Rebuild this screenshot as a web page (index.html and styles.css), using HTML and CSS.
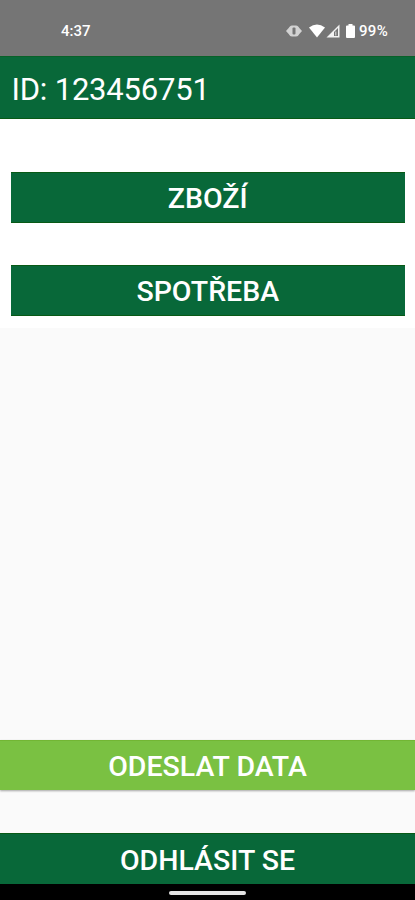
FILE: index.html
```html
<!DOCTYPE html>
<html lang="cs">
<head>
   <meta charset="UTF-8">
   <meta name="viewport" content="width=device-width, initial-scale=1">
   <link rel="stylesheet" href="styles.css">
   <title>Menu</title>
</head>

<body>
   <div class="status">
      <span>4:37</span>

      <div class="icons">
         <svg class="vibrate" width="18" height="14" viewBox="0 0 18 14">
            <path d="M1 7l4-4.500v9zM17 7l-4-4.500v9z" fill="#d2d2d2"/>
            <rect x="4.500" y="1.500" width="9" height="11" rx="2.500" fill="#d2d2d2"/>
            <rect x="7.500" y="3.500" width="3" height="7" rx="1" fill="#757575"/>
         </svg>
         <svg class="wifi" width="16" height="14" viewBox="0 0 16 14">
            <path d="M0 3.500Q8-2.500 16 3.500L8 13.500z" fill="#fff"/>
         </svg>
         <svg class="signal" width="14" height="14" viewBox="0 0 14 14">
            <path d="M.5 13.500L13.500.5v13z" fill="#f2f2f2"/>
            <path d="M8 8l4-4v8H8z" fill="#757575"/>
            <path d="M9.800 7.500v4" stroke="#ddd" stroke-width="1"/>
         </svg>
         <svg class="battery" width="9" height="14" viewBox="0 0 9 14">
            <path d="M2.500 0h4v1.500H8q1 0 1 1v10.500q0 1-1 1H1q-1 0-1-1V2.500q0-1 1-1h1.500z" fill="#fff"/>
         </svg>
         <span>99%</span>
      </div>
   </div>

   <h1>ID: 123456751</h1>

   <div class="menu">
      <button>ZBOŽÍ</button>
      <button>SPOTŘEBA</button>
   </div>

   <div class="footer">
      <button class="odeslat">ODESLAT DATA</button>
      <button>ODHLÁSIT SE</button>
   </div>

   <div class="nav"><div class="pill"></div></div>
</body>
</html>
```

FILE: styles.css
```css
* {
   border:0;
   margin:0;
   padding:0;
   box-sizing:border-box;
   font-family:Roboto, sans-serif;
}

body {
   background:#fafafa;
   display:flex;
   flex-direction:column;
   height:100vh;
   overflow:hidden;
}

.status {
   background:#757575;
   display:flex;
   justify-content:space-between;
   align-items:center;
   height:56px;
   padding:5px 27px 0 61px;
   color:#fff;
   font-size:15px;
   font-weight:500;
}

.icons {
   display:flex;
   align-items:center;
}

.icons span {
   letter-spacing:.3px;
}

.vibrate {
   margin-right:6px;
}

.wifi {
   margin-right:1px;
}

.signal {
   margin-right:6px;
}

.battery {
   margin-right:4px;
}

h1 {
   background:#086839;
   border-top:1px solid #086128;
   border-bottom:1px solid #085a16;
   height:62.500px;
   padding-left:11.500px;
   color:#fff;
   font-size:31px;
   font-weight:400;
   letter-spacing:-.2px;
   line-height:66px;
}

.menu {
   background:#fff;
   display:flex;
   flex-direction:column;
   gap:42.500px;
   height:209.500px;
   padding:53.500px 10.500px 0 11px;
}

button {
   background:#086839;
   border-top:1px solid #085a16;
   border-bottom:1px solid #085a16;
   width:100%;
   height:50.500px;
   color:#fff;
   font-size:28.500px;
   font-weight:500;
}

.menu button {
   padding-top:3px;
}

.footer {
   display:flex;
   flex-direction:column;
   gap:43px;
   margin-top:auto;
}

.footer button {
   border-bottom:0;
   height:51px;
   padding-top:2px;
}

.footer .odeslat {
   background:#7ac142;
   border-top:1px solid #72b634;
   box-shadow:0 1px 2px rgba(0,0,0,.35);
   height:50px;
}

.nav {
   background:#000;
   display:flex;
   justify-content:center;
   height:16px;
   padding-top:7px;
}

.pill {
   background:#e4e4e4;
   border-radius:2px;
   width:77px;
   height:4px;
}
```
